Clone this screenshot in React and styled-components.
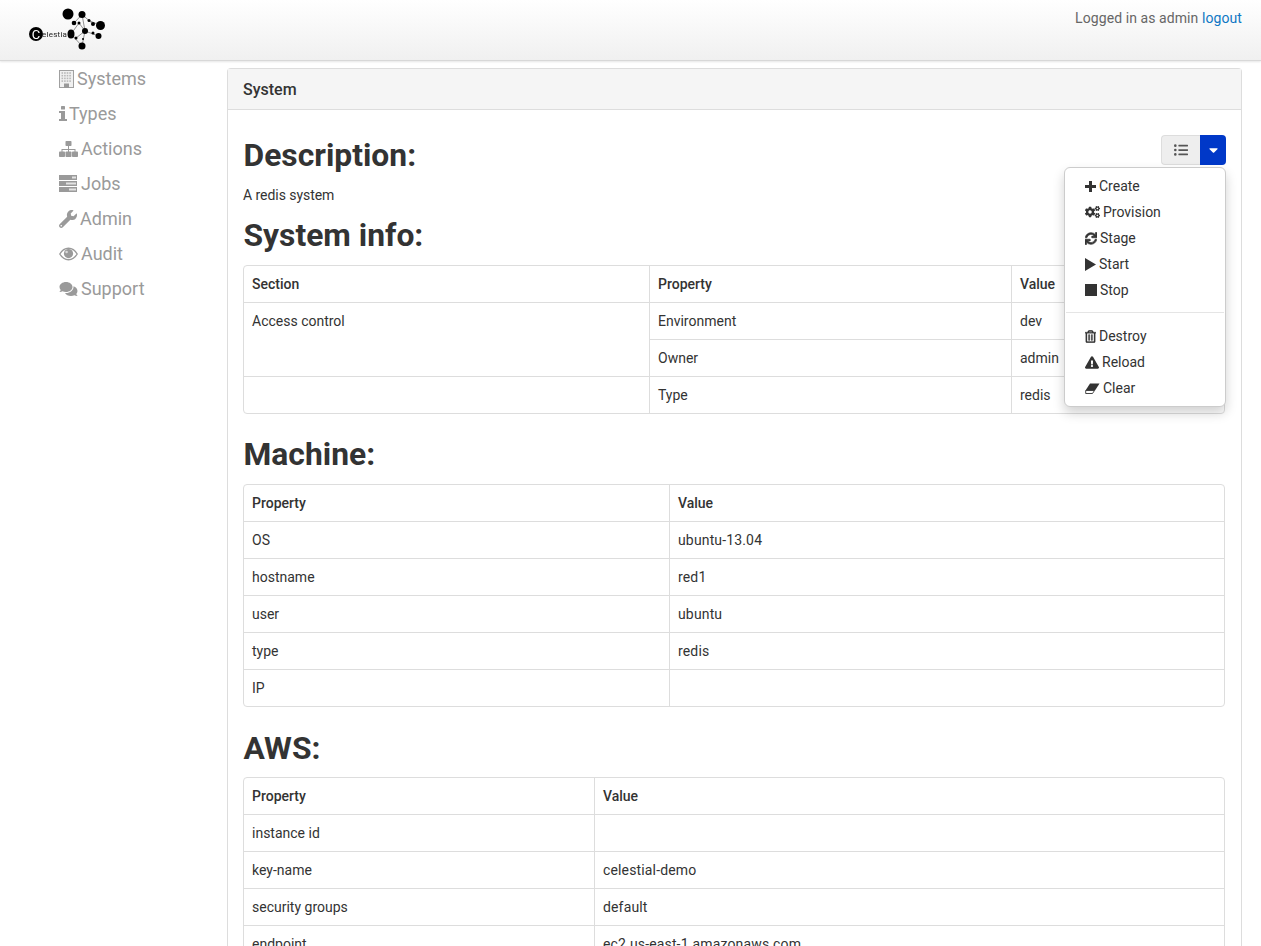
import React from "react";
import styled, { createGlobalStyle } from "styled-components";
import {
  FaWrench, FaComments, FaCogs, FaSync, FaRegTrashAlt, FaExclamationTriangle, FaListUl, FaCaretDown,
} from "react-icons/fa";

const Global = createGlobalStyle`
  html, body { margin: 0; padding: 0; height: 946px; overflow: hidden; background: #fff; }
  * { box-sizing: border-box; }
  body { font-family: Roboto, "Liberation Sans", sans-serif; font-size: 14px; line-height: 20px; color: #333; }
`;

const Header = styled.header`
  height: 61px;
  padding: 0 19px 0 28px;
  display: flex;
  justify-content: space-between;
  background: linear-gradient(to bottom, #ffffff 0%, #f0f0f0 100%);
  border-bottom: 1px solid #d8d8d8;
  box-shadow: 0 1px 2px rgba(0,0,0,.1);
`;
const LogoSvg = styled.svg`
  width: 80px;
  height: 54px;
  filter: blur(0.35px);
`;
const Login = styled.div`
  padding-top: 8px;
  color: #666;
  letter-spacing: .08px;
`;
const LogoutLink = styled.a`
  color: #0f77c4;
  text-decoration: none;
`;
const Page = styled.div`
  display: flex;
  align-items: flex-start;
  padding-right: 19px;
`;
const Side = styled.nav`
  width: 227px;
  flex: none;
  padding-left: 59px;
`;
const SideItem = styled.a`
  display: flex;
  align-items: center;
  gap: ${(p) => p.$gap}px;
  height: 35px;
  font-size: 18px;
  color: #9a9a9a;
  svg { flex: none; width: ${(p) => p.$w}px; height: ${(p) => p.$h}px; }
`;
const Panel = styled.section`
  flex: 1;
  min-width: 0;
  margin-top: 7px;
  border: 1px solid #ddd;
  border-radius: 4px 4px 0 0;
  border-bottom: 0;
`;
const PanelHead = styled.div`
  height: 41px;
  padding: 11px 15px 9px;
  background: #f5f5f5;
  border-bottom: 1px solid #ddd;
  font-size: 16px;
  font-weight: 500;
  color: #333;
`;
const PanelBody = styled.div`
  position: relative;
  padding: 15px 16px 0 15px;
`;
const Heading = styled.h2`
  margin: ${(p) => p.$top}px 0 ${(p) => p.$bottom}px .5px;
  font-size: 31.8px;
  line-height: 36px;
  font-weight: 700;
  color: #333;
`;
const Para = styled.p`
  margin: 0;
  height: 20px;
  letter-spacing: -.05px;
`;
const TableBox = styled.div`
  border: 1px solid #ddd;
  border-radius: 4px;
  overflow: hidden;
`;
const Table = styled.table`
  width: 100%;
  border-collapse: collapse;
  table-layout: fixed;
  tbody tr:last-child td { height: 36px; }
`;
const Th = styled.th`
  height: 36px;
  padding: 8px 8px 8px 8.5px;
  text-align: left;
  font-weight: 500;
  color: #333;
  border-left: 1px solid #ddd;
  width: ${(p) => p.$w || "auto"};
  &:first-child { border-left: 0; padding-left: 8px; }
`;
const Td = styled.td`
  height: 37px;
  padding: 8px 8px 8px ${(p) => (p.$edge ? 8 : 8.5)}px;
  vertical-align: top;
  color: #333;
  border-top: 1px solid #ddd;
  border-left: ${(p) => (p.$edge ? "0" : "1px solid #ddd")};
  letter-spacing: ${(p) => (p.$wide ? ".15px" : "0")};
`;
const BtnGroup = styled.div`
  position: absolute;
  top: 25px;
  right: 15px;
  display: flex;
  height: 30px;
`;
const ListBtn = styled.div`
  width: 39px;
  background: #eee;
  border: 1px solid #ddd;
  border-right: 0;
  border-radius: 4px 0 0 4px;
  color: #555;
  display: flex;
  align-items: center;
  justify-content: center;
  svg { width: 14px; height: 14px; }
`;
const CaretBtn = styled.div`
  width: 26px;
  background: #0038c8;
  border-radius: 0 4px 4px 0;
  color: #fff;
  display: flex;
  align-items: center;
  justify-content: center;
  svg { width: 11px; height: 14px; }
`;
const Menu = styled.div`
  position: absolute;
  top: 57px;
  right: 15px;
  width: 162px;
  height: 240px;
  padding: 5px 0;
  background: #fff;
  border: 1px solid #ccc;
  border-radius: 6px;
  box-shadow: 0 6px 12px rgba(0,0,0,.18);
  z-index: 5;
`;
const MenuItem = styled.div`
  height: 26px;
  padding-left: 20px;
  display: flex;
  align-items: center;
  gap: ${(p) => p.$gap}px;
  color: #333;
  svg {
    flex: none;
    width: ${(p) => p.$w}px;
    height: ${(p) => p.$h || 13}px;
    stroke: ${(p) => (p.$heavy ? "currentColor" : "none")};
    stroke-width: ${(p) => p.$heavy || 0}px;
  }
`;
const Divider = styled.div`
  height: 1px;
  margin: 9px 1px 10px;
  background: #e5e5e5;
`;

const windows = [];
for (let r = 0; r < 4; r++) for (let c = 0; c < 4; c++) windows.push([2.5 + c * 2.6, 2.2 + r * 2.7]);

const BuildingIcon = () => (
  <svg viewBox="0 0 15 18">
    <rect x=".5" y=".5" width="14" height="17" fill="#f0f0f0" stroke="#a0a0a0" />
    {windows.map(([x, y]) => <rect key={`${x}-${y}`} x={x} y={y} width="1.6" height="1.6" fill="#b8b8b8" />)}
    <rect x="5" y="13.5" width="5" height="4.5" fill="#999" />
  </svg>
);
const InfoIcon = () => (
  <svg viewBox="0 0 8 15" fill="currentColor">
    <rect x="2" y="0" width="4" height="3.6" rx=".6" />
    <path d="M0 5h6v8h2v2H0v-2h2V7H0z" />
  </svg>
);
const SitemapIcon = () => (
  <svg viewBox="0 0 19 16" fill="currentColor">
    <rect x="6.5" y="0" width="6" height="5" rx=".8" />
    <path d="M9 5h1v3h6.5v3h-1V9H10v2H9V9H3.5v2h-1V8H9z" />
    <rect x="0" y="10.5" width="6" height="5.5" rx=".8" />
    <rect x="6.5" y="10.5" width="6" height="5.5" rx=".8" />
    <rect x="13" y="10.5" width="6" height="5.5" rx=".8" />
  </svg>
);
const TasksIcon = () => (
  <svg viewBox="0 0 18 17" fill="currentColor">
    <rect x="0" y="0" width="18" height="5" />
    <rect x="0" y="6" width="18" height="5" />
    <rect x="0" y="12" width="18" height="5" />
    <rect x="13" y="1.5" width="4" height="2" fill="#e2e2e2" />
    <rect x="7" y="7.5" width="10" height="2" fill="#e2e2e2" />
    <rect x="10" y="13.5" width="7" height="2" fill="#e2e2e2" />
  </svg>
);
const EyeIcon = () => (
  <svg viewBox="0 0 19 14">
    <path d="M.8 7C3 3.2 6 1.2 9.5 1.2S16 3.2 18.2 7C16 10.8 13 12.8 9.5 12.8S3 10.8.8 7z" fill="#fff" stroke="currentColor" strokeWidth="1.4" />
    <circle cx="9.5" cy="6.6" r="4.6" fill="currentColor" />
    <circle cx="7.6" cy="5" r="1.3" fill="#d8d8d8" />
  </svg>
);
const PlusIcon = () => (
  <svg viewBox="0 0 11 11" fill="currentColor">
    <path d="M4 0h3v4h4v3H7v4H4V7H0V4h4z" />
  </svg>
);
const PlayIcon = () => (
  <svg viewBox="0 0 11 13" fill="currentColor"><path d="M0 0l11 6.5L0 13z" /></svg>
);
const StopIcon = () => (
  <svg viewBox="0 0 12 12" fill="currentColor"><rect width="12" height="12" /></svg>
);
const EraserIcon = () => (
  <svg viewBox="0 0 15 11">
    <path d="M5 .5h9.5L10 7.5H.5z" fill="currentColor" />
    <path d="M.7 7.5h8.8l-2 3H.7z" fill="#fff" stroke="currentColor" strokeWidth=".9" />
  </svg>
);

const nav = [
  [BuildingIcon, "Systems", 15, 3, 18],
  [InfoIcon, "Types", 8, 2, 15],
  [SitemapIcon, "Actions", 19, 3, 16],
  [TasksIcon, "Jobs", 18, 4, 17],
  [FaWrench, "Admin", 18, 3, 18],
  [EyeIcon, "Audit", 19, 3, 14],
  [FaComments, "Support", 19, 3, 16],
];

const Logo = () => {
  const dots = [
    [68, 14, 5.5], [82, 14.5, 3.5], [100.5, 25.5, 4.5], [82, 46, 3.5], [98.5, 36, 3], [85, 31, 3],
    [93, 24, 2], [74, 23, 2.3], [79, 23, 1.5], [89, 20.5, 1.5], [93, 33, 1.5], [76, 38, 1.5], [83, 39, 1],
  ];
  const links = [[74, 23, 82, 14.5], [82, 14.5, 85, 31], [85, 31, 82, 46], [76, 38, 85, 31], [71, 34, 79, 23], [82, 14.5, 93, 24], [85, 31, 98.5, 36], [71, 34, 82, 46], [85, 31, 79, 23], [89, 20.5, 100.5, 25.5]];
  return (
    <LogoSvg viewBox="28 0 80 54">
      {links.map((l) => <line key={l.join()} x1={l[0]} y1={l[1]} x2={l[2]} y2={l[3]} stroke="#666" strokeWidth=".7" />)}
      {dots.map((d) => <circle key={d.join()} cx={d[0]} cy={d[1]} r={d[2]} fill="#000" />)}
      <ellipse cx="71" cy="34" rx="3.5" ry="4.5" fill="#000" />
      <circle cx="36" cy="34" r="7" fill="#000" />
      <text x="36" y="38.5" textAnchor="middle" fontSize="13" fontFamily="Roboto, sans-serif" fill="#fff">C</text>
      <text x="42" y="37" fontSize="8" fontFamily="Roboto, sans-serif" fill="#222" letterSpacing=".25">elestia</text>
    </LogoSvg>
  );
};

const DataTable = ({ width, rows }) => (
  <TableBox>
    <Table>
      <thead>
        <tr><Th $w={width}>Property</Th><Th>Value</Th></tr>
      </thead>
      <tbody>
        {rows.map((r) => (
          <tr key={r[0]}><Td $edge>{r[0]}</Td><Td $wide>{r[1]}</Td></tr>
        ))}
      </tbody>
    </Table>
  </TableBox>
);

export default function App() {
  return (
    <>
      <Global />
      <Header>
        <Logo />
        <Login>Logged in as admin <LogoutLink href="#">logout</LogoutLink></Login>
      </Header>
      <Page>
        <Side>
          {nav.map(([I, t, w, g, h]) => (
            <SideItem key={t} $w={w} $gap={g} $h={h}><I />{t}</SideItem>
          ))}
        </Side>
        <Panel>
          <PanelHead>System</PanelHead>
          <PanelBody>
            <BtnGroup>
              <ListBtn><FaListUl /></ListBtn>
              <CaretBtn><FaCaretDown /></CaretBtn>
            </BtnGroup>
            <Menu>
              <MenuItem $w={11} $gap={3} $h={11}><PlusIcon />Create</MenuItem>
              <MenuItem $w={15} $gap={3} $h={14}><FaCogs />Provision</MenuItem>
              <MenuItem $w={12} $gap={3} $heavy={30}><FaSync />Stage</MenuItem>
              <MenuItem $w={11} $gap={3}><PlayIcon />Start</MenuItem>
              <MenuItem $w={12} $gap={3} $h={12}><StopIcon />Stop</MenuItem>
              <Divider />
              <MenuItem $w={11} $gap={3} $heavy={14}><FaRegTrashAlt />Destroy</MenuItem>
              <MenuItem $w={14} $gap={3}><FaExclamationTriangle />Reload</MenuItem>
              <MenuItem $w={15} $gap={3} $h={11}><EraserIcon />Clear</MenuItem>
            </Menu>
            <Heading $top={12} $bottom={12}>Description:</Heading>
            <Para>A redis system</Para>
            <Heading $top={12} $bottom={12}>System info:</Heading>
            <TableBox>
              <Table>
                <thead>
                  <tr><Th $w="405px">Section</Th><Th $w="362px">Property</Th><Th>Value</Th></tr>
                </thead>
                <tbody>
                  <tr><Td $edge rowSpan={2}>Access control</Td><Td>Environment</Td><Td>dev</Td></tr>
                  <tr><Td>Owner</Td><Td>admin</Td></tr>
                  <tr><Td $edge></Td><Td>Type</Td><Td>redis</Td></tr>
                </tbody>
              </Table>
            </TableBox>
            <Heading $top={22} $bottom={12}>Machine:</Heading>
            <DataTable
              width="425px"
              rows={[["OS", "ubuntu-13.04"], ["hostname", "red1"], ["user", "ubuntu"], ["type", "redis"], ["IP", ""]]}
            />
            <Heading $top={23} $bottom={11}>AWS:</Heading>
            <DataTable
              width="350px"
              rows={[["instance id", ""], ["key-name", "celestial-demo"], ["security groups", "default"], ["endpoint", "ec2.us-east-1.amazonaws.com"]]}
            />
          </PanelBody>
        </Panel>
      </Page>
    </>
  );
}
